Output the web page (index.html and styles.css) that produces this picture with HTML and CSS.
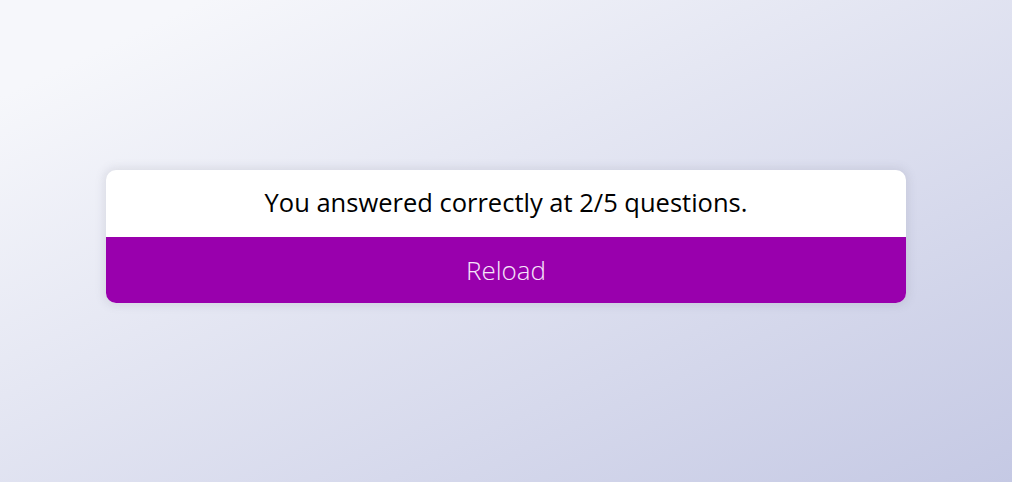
FILE: index.html
```html
<!DOCTYPE html>
<html>
<head>
<meta charset="utf-8">
<link rel="stylesheet" href="styles.css">
</head>
<body>
<main class="page">
  <div class="quiz">
    <h2 class="result">You answered correctly at 2/5 questions.</h2>
    <button class="reload">Reload</button>
  </div>
</main>
</body>
</html>
```
FILE: styles.css
```css
* { box-sizing: border-box; }
html, body { margin: 0; padding: 0; }
body {
  font-family: "Open Sans", "DejaVu Sans", sans-serif;
  background: linear-gradient(to bottom right, #f6f7fb 10%, #c5c9e4 100%);
  min-height: 100vh;
}
.page {
  height: 482px;
  display: flex;
  align-items: center;
  justify-content: center;
  padding-bottom: 9px;
}
.quiz {
  width: 800px;
  background: #fff;
  border-radius: 10px;
  overflow: hidden;
  box-shadow: 0 0 10px 2px rgba(100, 100, 120, 0.15);
}
.result {
  margin: 0;
  height: 67px;
  display: flex;
  align-items: center;
  justify-content: center;
  padding-bottom: 4px;
  font-size: 25.5px;
  font-weight: 500;
  color: #000;
}
.reload {
  display: block;
  width: 100%;
  height: 66px;
  border: none;
  background: #9900ad;
  color: #f7e6fa;
  font-family: inherit;
  font-size: 26px;
  font-weight: 300;
  cursor: pointer;
}
```
